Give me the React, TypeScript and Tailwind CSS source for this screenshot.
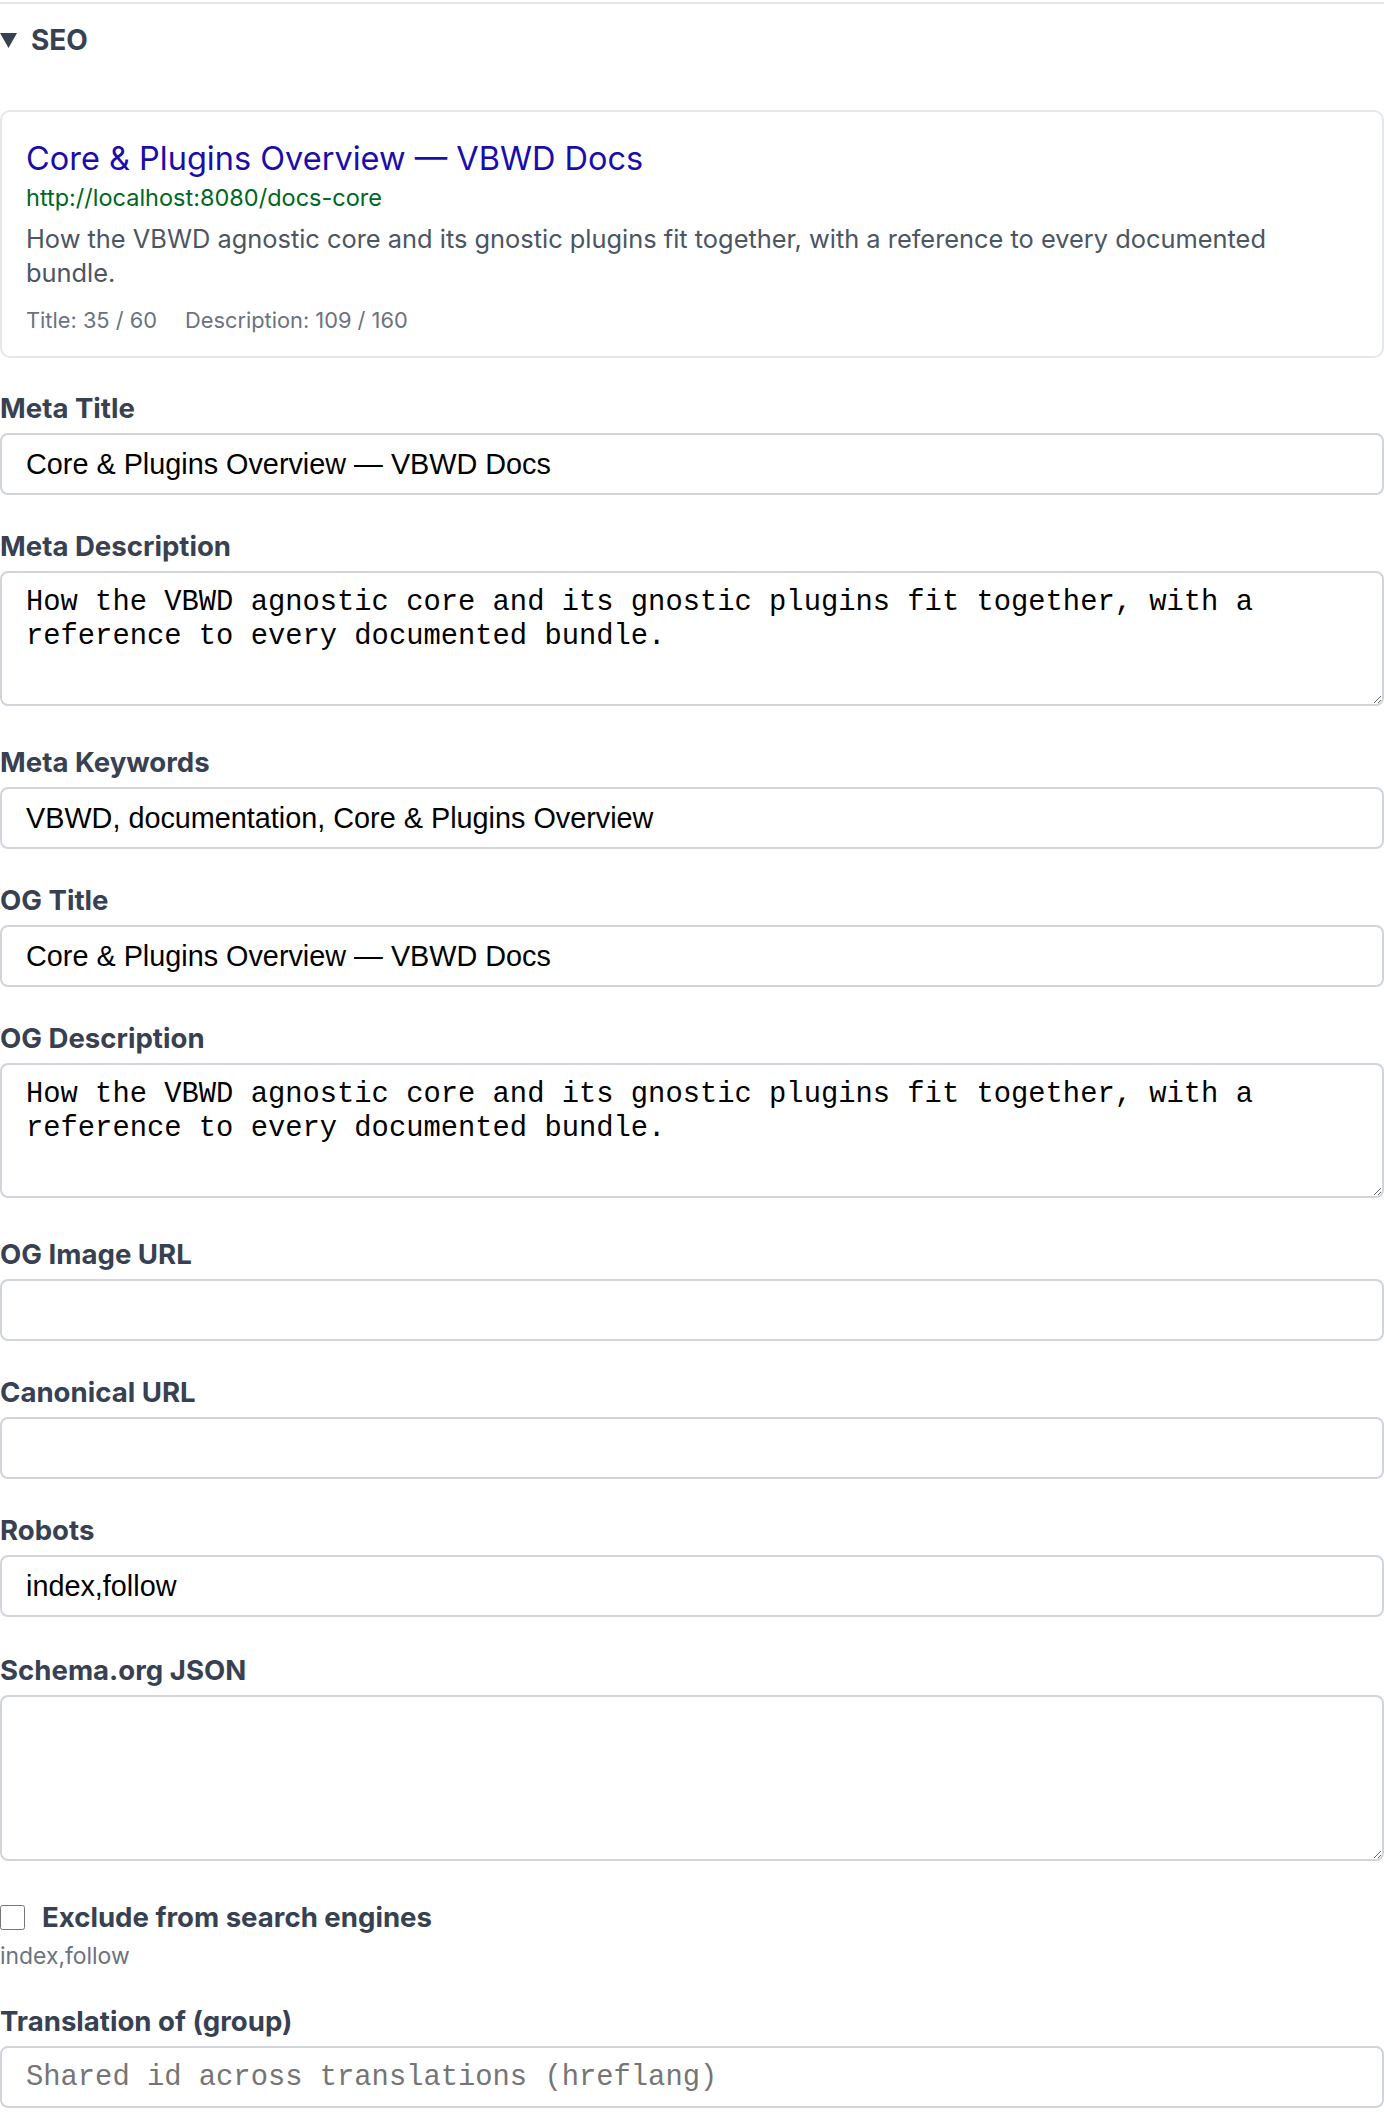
const desc =
  'How the VBWD agnostic core and its gnostic plugins fit together, with a reference to every documented bundle.';
const title = 'Core & Plugins Overview — VBWD Docs';

const labelCls = "block font-['Inter'] font-bold text-[27.6px] leading-[30px] text-[#374151] mb-[10px]";
const boxCls = 'block w-full border-2 border-[#d1d5db] rounded-[8px] bg-white text-black outline-none';
const inputCls = `${boxCls} h-[62px] px-[24px] font-['Liberation_Sans'] text-[28.8px]`;
const monoInputCls = `${boxCls} h-[62px] px-[24px] font-['Liberation_Mono'] text-[28.8px] placeholder:text-[#757575]`;
const areaCls = `${boxCls} px-[24px] pt-[13px] font-['Liberation_Mono'] text-[28.8px] leading-[34px]`;

function Field({ label, value, gap = 'mb-[36px]' }: { label: string; value: string; gap?: string }) {
  return (
    <div className={gap}>
      <label className={labelCls}>{label}</label>
      <input className={inputCls} defaultValue={value} />
    </div>
  );
}

function Area({ label, value, h = 'h-[135px]' }: { label: string; value: string; h?: string }) {
  return (
    <div className="mb-[41px]">
      <label className={labelCls}>{label}</label>
      <textarea className={`${areaCls} ${h}`} defaultValue={value} />
    </div>
  );
}

export default function App() {
  return (
    <div className="w-[1384px] bg-white font-['Inter',sans-serif]">
      <div className="mt-[2px] border-t-2 border-[#e5e7eb]" />

      {/* summary */}
      <div className="mt-[19px] flex items-center h-[34px] text-[#374151]">
        <svg width="17" height="15" viewBox="0 0 17 15" className="mr-[14px]">
          <polygon points="0,0 17,0 8.5,15" fill="currentColor" />
        </svg>
        <span className="font-bold text-[28px] leading-[34px]">SEO</span>
      </div>

      {/* search preview */}
      <div className="mt-[53px] border-2 border-[#e5e7eb] rounded-[10px] px-[24px] pt-[25px] pb-[21px]">
        <div className="text-[32.5px] leading-[44px] text-[#1a0dab]">{title}</div>
        <div className="mt-[1px] text-[23.5px] leading-[32px] text-[#006621]">http://localhost:8080/docs-core</div>
        <div className="mt-[8px] text-[25.4px] leading-[34px] text-[#4b5563]">{desc}</div>
        <div className="mt-[15px] flex gap-[28px] text-[21.8px] leading-[30px] text-[#6b7280]">
          <span>Title: 35 / 60</span>
          <span>Description: 109 / 160</span>
        </div>
      </div>

      <div className="mt-[35px]">
        <Field label="Meta Title" value={title} />
        <Area label="Meta Description" value={desc} />
        <Field label="Meta Keywords" value="VBWD, documentation, Core & Plugins Overview" />
        <Field label="OG Title" value={title} />
        <Area label="OG Description" value={desc} />
        <Field label="OG Image URL" value="" />
        <Field label="Canonical URL" value="" />
        <Field label="Robots" value="index,follow" gap="mb-[38px]" />
        <Area label="Schema.org JSON" value="" h="h-[166px]" />

        <label className="flex items-center h-[30px] gap-[17px]">
          <input type="checkbox" className="w-[25px] h-[25px] m-0" />
          <span className="font-bold text-[27.6px] leading-[30px] text-[#374151]">Exclude from search engines</span>
        </label>
        <div className="mt-[11px] text-[22.9px] leading-[26px] text-[#6b7280]">index,follow</div>

        <div className="mt-[37px]">
          <label className={labelCls}>Translation of (group)</label>
          <input className={monoInputCls} placeholder="Shared id across translations (hreflang)" />
        </div>
      </div>
    </div>
  );
}
